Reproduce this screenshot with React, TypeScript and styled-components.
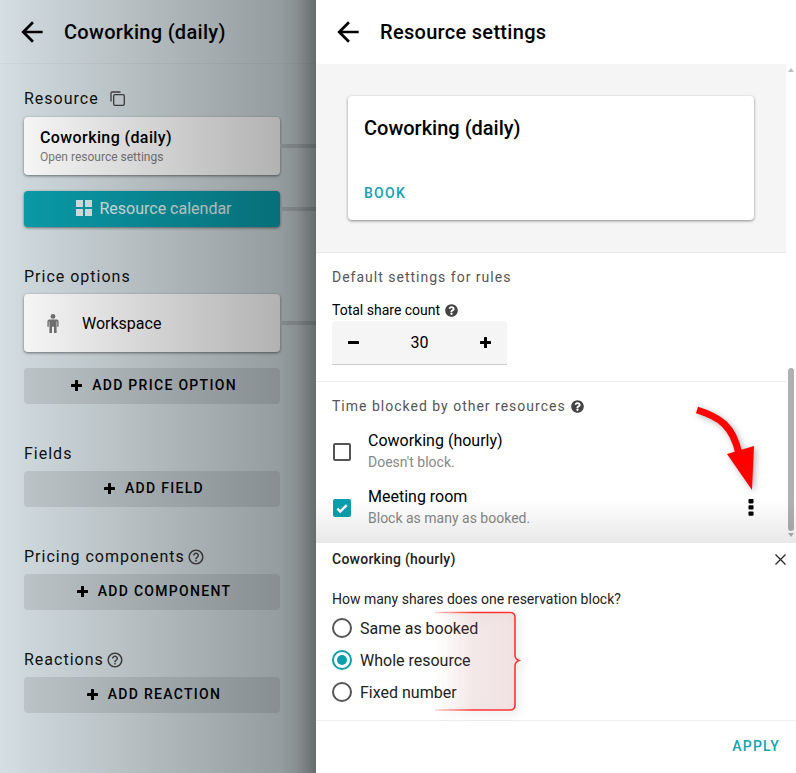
import React from 'react'
import styled, { createGlobalStyle } from 'styled-components'
import { FaQuestionCircle } from 'react-icons/fa'
import { MdHelpOutline } from 'react-icons/md'

const teal = '#0a9fad'

const GlobalStyle = createGlobalStyle`
  html, body {
    margin: 0;
    height: 100%;
    overflow: hidden;
    background: #fff;
    font-family: Roboto, "Liberation Sans", sans-serif;
    color: #000;
  }
  * { box-sizing: border-box; }
`

const BackIcon = () => (
  <svg width={32} height={32} viewBox='0 0 24 24'>
    <path d='M20 11H7.83l5.59-5.59L12 4l-8 8 8 8 1.41-1.41L7.83 13H20v-2z' />
  </svg>
)

const CopyIcon = () => (
  <svg width={15} height={15} viewBox='0 0 15 15' fill='none' stroke='#444' strokeWidth={1.3}>
    <rect x={3.7} y={3.7} width={10.6} height={10.6} rx={1.3} />
    <path d='M1 10.5V2.2C1 1.5 1.5 1 2.2 1H10.5' />
  </svg>
)

const GridIcon = () => (
  <svg width={16} height={16} viewBox='0 0 16 16' fill='currentColor'>
    <rect x={0} y={0} width={7} height={7} />
    <rect x={9} y={0} width={7} height={7} />
    <rect x={0} y={9} width={7} height={7} />
    <rect x={9} y={9} width={7} height={7} />
  </svg>
)

const PersonIcon = () => (
  <svg width={12} height={19} viewBox='0 0 12 19' fill='#757575'>
    <circle cx={6} cy={2.4} r={2.4} />
    <path d='M2.4 5.4h7.2a2 2 0 0 1 2 2v5.4h-1.4V7.6h-.6V19H7v-6.2H5V19H2.4V7.6h-.6v5.2H.4V7.4a2 2 0 0 1 2-2z' />
  </svg>
)

const PlusIcon = () => (
  <svg width={11} height={11} viewBox='0 0 11 11'>
    <rect x={4} y={0} width={3} height={11} rx={0.6} />
    <rect x={0} y={4} width={11} height={3} rx={0.6} />
  </svg>
)

const MinusIcon = () => (
  <svg width={11} height={11} viewBox='0 0 11 11'>
    <rect x={0} y={4} width={11} height={3} rx={0.6} />
  </svg>
)

const CloseIcon = () => (
  <svg width={11} height={11} viewBox='0 0 11 11' stroke='#222' strokeWidth={1.2}>
    <path d='M.5.5l10 10M10.5.5l-10 10' />
  </svg>
)

const MoreIcon = () => (
  <svg width={6} height={17} viewBox='0 0 6 17'>
    <rect x={0.5} y={0} width={5} height={4.4} rx={0.8} />
    <rect x={0.5} y={6.2} width={5} height={4.4} rx={0.8} />
    <rect x={0.5} y={12.4} width={5} height={4.4} rx={0.8} />
  </svg>
)

const CheckIcon = () => (
  <svg width={14} height={14} viewBox='0 0 24 24'>
    <path d='M4 13l5 5L20 7' fill='none' stroke='#fff' strokeWidth={4} />
  </svg>
)

const Page = styled.div`
  display: flex;
  width: 796px;
  height: 773px;
`

const Backdrop = styled.aside`
  position: relative;
  flex: 0 0 316px;
  background: #d6e0e4;
`

const Scrim = styled.div`
  position: absolute;
  inset: 0;
  pointer-events: none;
  background: linear-gradient(
    to right,
    rgba(0, 0, 0, 0) 0,
    rgba(0, 0, 0, 0.04) 24px,
    rgba(0, 0, 0, 0.3) 280px,
    rgba(0, 0, 0, 0.36) 296px,
    rgba(0, 0, 0, 0.52) 316px
  );
`

const Header = styled.header<{ $ruled?: boolean }>`
  display: flex;
  align-items: center;
  gap: 16px;
  height: 64px;
  padding-left: 16px;
  border-bottom: 1px solid ${(p) => (p.$ruled ? '#d0d8db' : 'transparent')};
`

const Title = styled.h1`
  margin: 0;
  font-size: 20px;
  line-height: 28px;
  font-weight: 500;
  letter-spacing: 0.3px;
`

const BackdropBody = styled.div`
  display: flex;
  flex-direction: column;
  gap: 39px;
  padding: 24px 36px 0 24px;
`

const Group = styled.section`
  display: flex;
  flex-direction: column;
`

const GroupHeading = styled.h2<{ $roomy?: boolean }>`
  display: flex;
  align-items: center;
  gap: 2px;
  margin: 0 0 ${(p) => (p.$roomy ? '8px' : '7px')};
  height: 21px;
  font-size: 16px;
  line-height: 21px;
  font-weight: 400;
  letter-spacing: 1px;
  color: #111;
  svg { color: #444; }
`

const CopyWrap = styled.span`
  display: inline-flex;
  margin-left: 9px;
`

const Stack = styled.div`
  display: flex;
  flex-direction: column;
  gap: 16px;
`

const Connected = styled.div`
  position: relative;
  &::after {
    content: '';
    position: absolute;
    top: 50%;
    left: 100%;
    width: 36px;
    height: 4px;
    margin-top: -2px;
    background: #bcc5c9;
  }
`

const ResourceCard = styled.div`
  display: flex;
  flex-direction: column;
  justify-content: center;
  height: 58px;
  padding: 0 16px;
  background: #fff;
  border-radius: 4px;
  box-shadow: 0 1px 3px rgba(0, 0, 0, 0.5);
`

const ResourceName = styled.div`
  font-size: 16px;
  line-height: 22px;
  font-weight: 500;
  letter-spacing: 0.4px;
`

const ResourceHint = styled.div`
  font-size: 12px;
  line-height: 16px;
  color: #808080;
`

const OptionCard = styled(ResourceCard)`
  flex-direction: row;
  justify-content: flex-start;
  align-items: center;
  gap: 23px;
  padding-left: 23px;
  font-size: 16px;
`

const CalendarButton = styled.div`
  display: flex;
  align-items: center;
  justify-content: center;
  gap: 7px;
  height: 36px;
  padding: 0 0 2px 4px;
  font-size: 16px;
  color: #e4eff0;
  background: ${teal};
  border-radius: 4px;
  box-shadow: 0 1px 3px rgba(0, 0, 0, 0.5);
`

const AddButton = styled.div`
  display: flex;
  align-items: center;
  justify-content: center;
  gap: 10px;
  height: 36px;
  padding: 0 0 2px 4px;
  font-size: 14px;
  font-weight: 500;
  letter-spacing: 1.3px;
  background: rgba(0, 0, 0, 0.09);
  border-radius: 4px;
`

const Panel = styled.main`
  position: relative;
  display: flex;
  flex-direction: column;
  flex: 1;
  background: #fff;
`

const ScrollArea = styled.div`
  position: relative;
  display: flex;
  height: 479px;
  overflow: hidden;
`

const ScrollContent = styled.div`
  flex: 1;
`

const Fade = styled.div`
  position: absolute;
  left: 0;
  right: 0;
  bottom: 0;
  height: 44px;
  pointer-events: none;
  background: linear-gradient(to bottom, rgba(0, 0, 0, 0), rgba(0, 0, 0, 0.09));
`

const Scrollbar = styled.div`
  display: flex;
  flex-direction: column;
  align-items: center;
  flex: 0 0 10px;
  padding-top: 4px;
`

const ScrollArrow = styled.div<{ $down?: boolean }>`
  width: 0;
  height: 0;
  border-left: 3.5px solid transparent;
  border-right: 3.5px solid transparent;
  ${(p) =>
    p.$down
      ? 'border-top: 4px solid #b0b0b0; margin-top: 2px;'
      : 'border-bottom: 4px solid #c0c0c0;'}
`

const ScrollThumb = styled.div`
  width: 6px;
  height: 163px;
  margin-top: 296px;
  border-radius: 3px;
  background: #b0b0b0;
`

const PreviewBand = styled.section`
  padding: 32px;
  height: 189px;
  background: #f5f5f5;
  border-bottom: 1px solid #e8e8e8;
`

const PreviewCard = styled.div`
  display: flex;
  flex-direction: column;
  justify-content: space-between;
  width: 406px;
  height: 124px;
  padding: 18px 16px 18px;
  background: #fff;
  border-radius: 4px;
  box-shadow: 0 1px 3px rgba(0, 0, 0, 0.45);
`

const PreviewTitle = styled.div`
  font-size: 20px;
  line-height: 28px;
  font-weight: 500;
`

const TextAction = styled.div`
  font-size: 14px;
  line-height: 18px;
  font-weight: 500;
  letter-spacing: 1.25px;
  color: #12a3b3;
`

const Block = styled.section`
  padding: 16px 16px 0;
  border-bottom: 1px solid #eee;
  &:last-child { border-bottom: 0; }
`

const BlockHeading = styled.h3`
  display: flex;
  align-items: center;
  gap: 5px;
  margin: 0;
  font-size: 14px;
  line-height: 16px;
  font-weight: 400;
  letter-spacing: 1px;
  color: #555;
  svg { color: #444; }
`

const FieldLabel = styled.div`
  display: flex;
  align-items: center;
  gap: 5px;
  margin-top: 17px;
  font-size: 14px;
  line-height: 16px;
  svg { color: #444; }
`

const Stepper = styled.div`
  display: grid;
  grid-template-columns: 42px 1fr 44px;
  align-items: center;
  justify-items: center;
  width: 175px;
  height: 44px;
  margin: 3px 0 16px;
  font-size: 16px;
  background: #f5f5f5;
  border-bottom: 1px solid #ccc;
  border-radius: 4px 4px 0 0;
`

const StepperValue = styled.span`
  padding-left: 2px;
`

const BlockRows = styled.div`
  display: flex;
  flex-direction: column;
  gap: 14px;
  padding-top: 16px;
`

const Rule = styled.div`
  display: flex;
  align-items: center;
  gap: 17px;
  height: 42px;
  padding-left: 1px;
`

const CheckBox = styled.span<{ $on?: boolean }>`
  display: flex;
  align-items: center;
  justify-content: center;
  flex: 0 0 18px;
  height: 18px;
  margin-top: 2px;
  border-radius: 2px;
  border: ${(p) => (p.$on ? `2px solid ${teal}` : '2px solid #555')};
  background: ${(p) => (p.$on ? teal : 'transparent')};
`

const RuleText = styled.div`
  flex: 1;
`

const RuleName = styled.div`
  font-size: 16px;
  line-height: 22px;
`

const RuleHint = styled.div`
  font-size: 14px;
  line-height: 20px;
  color: #888;
`

const RuleMenu = styled.span`
  display: flex;
  margin-right: 16px;
`

const Dialog = styled.section`
  display: flex;
  flex-direction: column;
  flex: 1;
  background: #fff;
`

const DialogTop = styled.div`
  flex: 0 0 178px;
  padding: 8px 16px 0;
  border-bottom: 1px solid #eee;
`

const DialogHead = styled.div`
  display: flex;
  align-items: center;
  justify-content: space-between;
  height: 16px;
  margin-right: -6px;
  font-size: 14px;
  font-weight: 500;
  letter-spacing: 0.25px;
  color: #222;
`

const Question = styled.div`
  margin-top: 24px;
  font-size: 14px;
  line-height: 16px;
  color: #222;
`

const RadioList = styled.div`
  display: flex;
  flex-direction: column;
  margin-top: 5px;
`

const RadioRow = styled.div`
  display: flex;
  align-items: center;
  gap: 8px;
  height: 32px;
  font-size: 16px;
  color: #222;
`

const RadioDot = styled.span<{ $on?: boolean }>`
  display: flex;
  align-items: center;
  justify-content: center;
  width: 20px;
  height: 20px;
  border-radius: 50%;
  border: 2px solid ${(p) => (p.$on ? teal : '#555')};
  &::after {
    content: '';
    width: 10px;
    height: 10px;
    border-radius: 50%;
    background: ${(p) => (p.$on ? teal : 'transparent')};
  }
`

const DialogFoot = styled.div`
  display: flex;
  flex: 1;
  align-items: center;
  justify-content: flex-end;
  padding: 0 16px 2px 0;
`

const Arrow = styled.svg`
  position: absolute;
  top: 400px;
  left: 372px;
  filter: drop-shadow(2px 2px 3px rgba(0, 0, 0, 0.3));
  pointer-events: none;
`

const Brace = styled.svg`
  position: absolute;
  top: 608px;
  left: 116px;
  filter: drop-shadow(3px 3px 4px rgba(0, 0, 0, 0.2));
  pointer-events: none;
`

const addGroups = [
  { title: 'Fields', action: 'ADD FIELD', help: false },
  { title: 'Pricing components', action: 'ADD COMPONENT', help: true },
  { title: 'Reactions', action: 'ADD REACTION', help: true },
]

const radios = [
  { label: 'Same as booked', on: false },
  { label: 'Whole resource', on: true },
  { label: 'Fixed number', on: false },
]

export default function App() {
  return (
    <Page>
      <GlobalStyle />
      <Backdrop>
        <Header $ruled>
          <BackIcon />
          <Title>Coworking (daily)</Title>
        </Header>
        <BackdropBody>
          <Group>
            <GroupHeading $roomy>
              Resource
              <CopyWrap>
                <CopyIcon />
              </CopyWrap>
            </GroupHeading>
            <Stack>
              <Connected>
                <ResourceCard>
                  <ResourceName>Coworking (daily)</ResourceName>
                  <ResourceHint>Open resource settings</ResourceHint>
                </ResourceCard>
              </Connected>
              <Connected>
                <CalendarButton>
                  <GridIcon />
                  Resource calendar
                </CalendarButton>
              </Connected>
            </Stack>
          </Group>
          <Group>
            <GroupHeading>Price options</GroupHeading>
            <Stack>
              <Connected>
                <OptionCard>
                  <PersonIcon />
                  Workspace
                </OptionCard>
              </Connected>
              <AddButton>
                <PlusIcon />
                ADD PRICE OPTION
              </AddButton>
            </Stack>
          </Group>
          {addGroups.map((g) => (
            <Group key={g.title}>
              <GroupHeading>
                {g.title}
                {g.help && <MdHelpOutline size={18} />}
              </GroupHeading>
              <AddButton>
                <PlusIcon />
                {g.action}
              </AddButton>
            </Group>
          ))}
        </BackdropBody>
        <Scrim />
      </Backdrop>

      <Panel>
        <Header>
          <BackIcon />
          <Title>Resource settings</Title>
        </Header>
        <ScrollArea>
          <ScrollContent>
            <PreviewBand>
              <PreviewCard>
                <PreviewTitle>Coworking (daily)</PreviewTitle>
                <TextAction>BOOK</TextAction>
              </PreviewCard>
            </PreviewBand>
            <Block>
              <BlockHeading>Default settings for rules</BlockHeading>
              <FieldLabel>
                Total share count
                <FaQuestionCircle size={13} />
              </FieldLabel>
              <Stepper>
                <MinusIcon />
                <StepperValue>30</StepperValue>
                <PlusIcon />
              </Stepper>
            </Block>
            <Block>
              <BlockHeading>
                Time blocked by other resources
                <FaQuestionCircle size={13} />
              </BlockHeading>
              <BlockRows>
                <Rule>
                  <CheckBox />
                  <RuleText>
                    <RuleName>Coworking (hourly)</RuleName>
                    <RuleHint>Doesn't block.</RuleHint>
                  </RuleText>
                </Rule>
                <Rule>
                  <CheckBox $on>
                    <CheckIcon />
                  </CheckBox>
                  <RuleText>
                    <RuleName>Meeting room</RuleName>
                    <RuleHint>Block as many as booked.</RuleHint>
                  </RuleText>
                  <RuleMenu>
                    <MoreIcon />
                  </RuleMenu>
                </Rule>
              </BlockRows>
            </Block>
          </ScrollContent>
          <Scrollbar>
            <ScrollArrow />
            <ScrollThumb />
            <ScrollArrow $down />
          </Scrollbar>
          <Fade />
        </ScrollArea>
        <Dialog>
          <DialogTop>
            <DialogHead>
              Coworking (hourly)
              <CloseIcon />
            </DialogHead>
            <Question>How many shares does one reservation block?</Question>
            <RadioList>
              {radios.map((r) => (
                <RadioRow key={r.label}>
                  <RadioDot $on={r.on} />
                  {r.label}
                </RadioRow>
              ))}
            </RadioList>
          </DialogTop>
          <DialogFoot>
            <TextAction>APPLY</TextAction>
          </DialogFoot>
        </Dialog>

        <Arrow width={72} height={96} viewBox='0 0 72 96'>
          <path d='M9 10C32 17 45 26 51 54' fill='none' stroke='#f00' strokeWidth={7} />
          <path d='M39 54L66 46L64 90Z' fill='#f00' />
        </Arrow>
        <Brace width={100} height={108} viewBox='0 0 100 108'>
          <defs>
            <linearGradient id='braceFill' x1='0' x2='1' y1='0' y2='0'>
              <stop offset='0' stopColor='#c86060' stopOpacity={0} />
              <stop offset='0.45' stopColor='#c86060' stopOpacity={0.12} />
              <stop offset='1' stopColor='#c86060' stopOpacity={0.14} />
            </linearGradient>
            <linearGradient id='braceLine' x1='0' x2='1' y1='0' y2='0'>
              <stop offset='0' stopColor='#f33' stopOpacity={0.2} />
              <stop offset='0.45' stopColor='#f33' />
            </linearGradient>
          </defs>
          <path
            d='M3 4.5H78Q83 4.5 83 9.5V47Q83 51 87 52.5Q83 54 83 58V97Q83 102 78 102H3Z'
            fill='url(#braceFill)'
          />
          <path
            d='M3 4.5H78Q83 4.5 83 9.5V47Q83 51 87 52.5Q83 54 83 58V97Q83 102 78 102H3'
            fill='none'
            stroke='url(#braceLine)'
            strokeWidth={1.6}
          />
        </Brace>
      </Panel>
    </Page>
  )
}
